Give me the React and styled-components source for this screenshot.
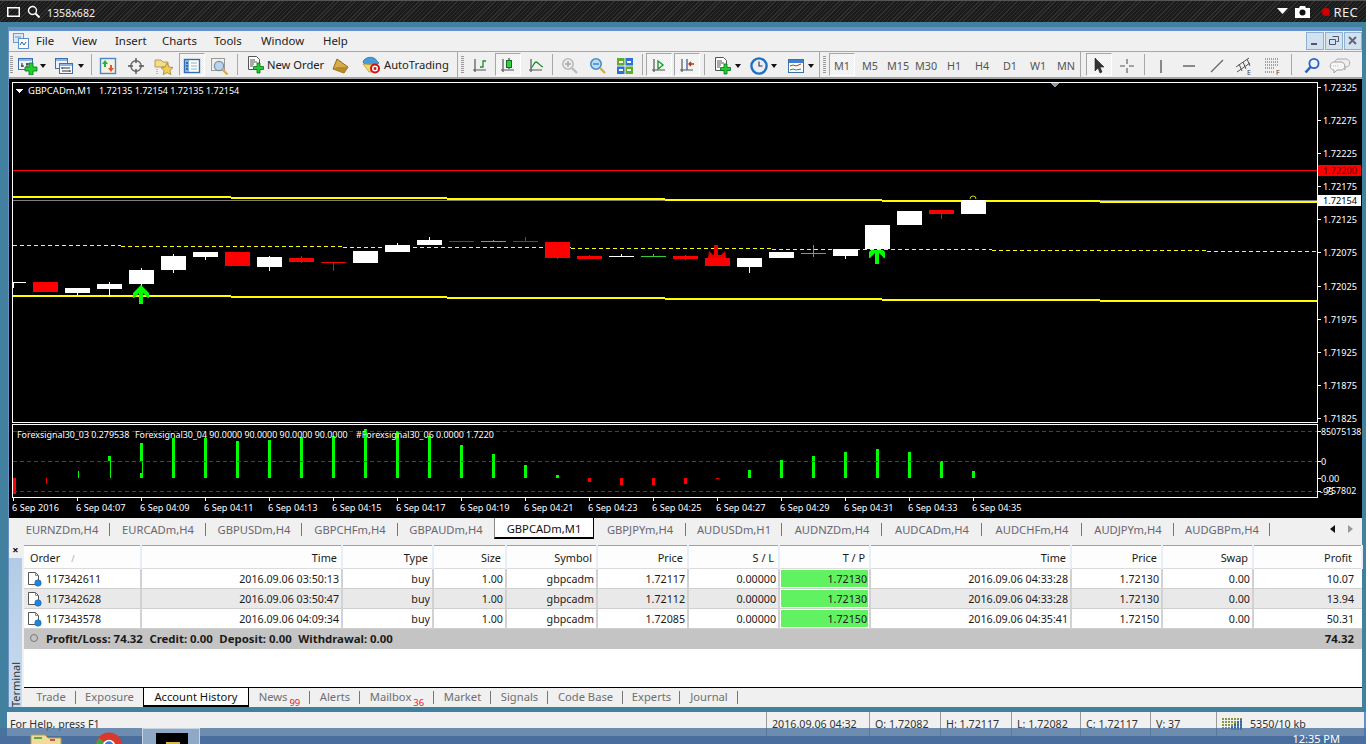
import React from "react";
import styled, { createGlobalStyle } from "styled-components";

const FONT = `"Noto Sans", "Open Sans", "Liberation Sans", sans-serif`;

const GlobalStyle = createGlobalStyle`
  html, body { margin: 0; padding: 0; background: #fff; }
  body { font-family: ${FONT}; font-size: 11px; color: #222; }
`;

const Screen = styled.div`
  position: relative;
  width: 1366px;
  height: 744px;
  overflow: hidden;
  background: #42809f;
`;

/* ---------- screen recorder bar ---------- */
const RecorderBar = styled.div`
  height: 21px;
  border-top: 1px solid #555;
  display: flex;
  align-items: center;
  padding: 0 8px 0 7px;
  color: #eee;
  font-size: 10.6px;
  background: repeating-linear-gradient(135deg, #1b1b1b 0 2px, #303030 2px 3px);
`;
const RecSize = styled.span`
  flex: 1;
  padding-top: 2px;
`;
const RecTool = styled.div`
  flex: none;
  width: ${(p) => p.$w}px;
  display: flex;
  justify-content: center;
`;
const RecDot = styled.span`
  width: 8px;
  height: 8px;
  margin: 0 4px 0 4px;
  border-radius: 50%;
  background: #d00000;
`;
const RecLabel = styled.span`
  font-size: 13px;
  letter-spacing: 0.3px;
`;

/* ---------- app window ---------- */
const AppWindow = styled.div`
  margin: 5px 4px 0 8px;
  border-top: 4px solid #6490c8;
  border-left: 1px solid #6a93c4;
  background: #f0f0f0;
`;
const MenuBar = styled.div`
  height: 20px;
  display: flex;
  align-items: center;
  padding-left: 4px;
  background: #f0f0f0;
`;
const MenuList = styled.div`
  display: flex;
  padding: 0 0 2px 7px;
`;
const MenuItem = styled.span`
  width: ${(p) => p.$w}px;
  font-size: 11.4px;
  color: #222;
`;
const WinControls = styled.div`
  margin-left: auto;
  display: flex;
  gap: 1px;
`;
const WinButton = styled.div`
  width: 16px;
  height: 16px;
  border: 1px solid #8fb0cf;
  background: #d3e2f1;
  display: flex;
  align-items: center;
  justify-content: center;
`;

const Toolbar = styled.div`
  height: 25px;
  display: flex;
  border-top: 1px solid #a8a8a8;
  border-bottom: 2px solid #a4a4a4;
  background: #f0f0f0;
`;
const Band = styled.div`
  display: flex;
  align-items: center;
  width: ${(p) => p.$w}px;
  border-right: 1px solid ${(p) => (p.$last ? "transparent" : "#a8a8a8")};
  box-sizing: content-box;
`;
const Grip = styled.div`
  width: 3px;
  height: 18px;
  margin: 0 ${(p) => p.$after}px 0 ${(p) => p.$before}px;
  background: repeating-linear-gradient(#9a9a9a 0 1px, #f0f0f0 1px 2px);
`;
const Tool = styled.div`
  flex: none;
  box-sizing: border-box;
  width: ${(p) => p.$w || 28}px;
  height: 23px;
  padding-top: 2px;
  margin-left: ${(p) => p.$ml || 0}px;
  display: flex;
  align-items: center;
  justify-content: center;
  position: relative;
  font-size: 10.8px;
  color: #555;
  ${(p) => p.$on && `
    &::before {
      content: "";
      position: absolute;
      left: 1px; right: 1px; top: 0; bottom: 0;
      border: 1px solid;
      border-color: #a6a6a6 #fff #fff #a6a6a6;
      background: repeating-conic-gradient(#fbfbfb 0 25%, #ededed 0 50%) 0 0 / 2px 2px;
    }
    & > * { position: relative; }
  `}
`;
const TextTool = styled.div`
  flex: none;
  width: ${(p) => p.$w}px;
  display: flex;
  align-items: center;
  gap: 3px;
  padding-left: 6px;
  box-sizing: border-box;
  font-size: 11.2px;
  color: #222;
  white-space: nowrap;
`;
const Arrow = styled.span`
  flex: none;
  width: 8px;
  padding-top: 2px;
  display: flex;
  justify-content: center;
  &::after {
    content: "";
    border: 3px solid transparent;
    border-top: 4px solid #111;
    border-bottom: 0;
  }
`;
const Sep = styled.span`
  flex: none;
  width: 1px;
  height: 21px;
  background: #a8a8a8;
  margin: 0 ${(p) => p.$r}px 0 ${(p) => p.$l}px;
`;

/* ---------- chart ---------- */
const ChartSvg = styled.svg`
  display: block;
  width: 1353px;
  height: 439px;
  background: #000;
  font-family: ${FONT};
  font-size: 9.2px;
`;

/* ---------- symbol tabs ---------- */
const SymbolTabs = styled.div`
  height: 23px;
  display: flex;
  padding-left: 5px;
  background: #f0f0f0;
`;
const SymbolTab = styled.div`
  flex: none;
  box-sizing: border-box;
  width: ${(p) => p.$w}px;
  height: 21px;
  padding-top: 2px;
  display: flex;
  align-items: center;
  justify-content: center;
  font-size: 11.2px;
  color: ${(p) => (p.$on ? "#111" : "#6a6670")};
  background: ${(p) => (p.$on ? "#fff" : "transparent")};
  ${(p) => p.$on
    ? "border-right: 1px solid #000; border-bottom: 2px solid #000; border-left: 1px solid #888;"
    : ""}
  ${(p) => p.$div && `
    position: relative;
    &::after {
      content: "";
      position: absolute;
      right: 0; top: 5px; bottom: 3px;
      width: 1px;
      background: #777;
    }
  `}
`;
const TabScroll = styled.div`
  margin-left: auto;
  display: flex;
  align-items: center;
  gap: 13px;
  height: 21px;
  padding-right: 9px;
`;
const ScrollTri = styled.span`
  border: 4px solid transparent;
  ${(p) => p.$dir === "left"
    ? "border-right: 5px solid #111; border-left: 0;"
    : "border-left: 5px solid #999; border-right: 0;"}
`;

/* ---------- terminal ---------- */
const Terminal = styled.div`
  height: 166px;
  display: flex;
  background: #f0f0f0;
`;
const SidePanel = styled.div`
  flex: none;
  width: 13px;
  margin-right: 2px;
  display: flex;
  flex-direction: column;
`;
const CloseCell = styled.div`
  height: 17px;
  display: flex;
  align-items: center;
  justify-content: center;
  font-size: 11px;
  font-weight: 700;
  color: #111;
`;
const SideLabel = styled.div`
  flex: 1;
  display: flex;
  flex-direction: column;
  align-items: center;
  background: linear-gradient(#b3cbe6, #c9dcef);
  span {
    writing-mode: vertical-rl;
    transform: rotate(180deg);
    margin-top: auto;
    font-size: 11px;
    color: #333;
    line-height: 13px;
  }
`;
const TerminalMain = styled.div`
  flex: 1;
  padding-top: 4px;
  display: flex;
  flex-direction: column;
  min-width: 0;
`;
const TableArea = styled.div`
  flex: 1;
  background: #fff;
`;
const Table = styled.table`
  border-collapse: collapse;
  table-layout: fixed;
  width: 1338px;
  font-size: 10.7px;
  color: #1a1a1a;
`;
const HeadCell = styled.th`
  height: 22px;
  padding: 0 ${(p) => (p.$end ? 9 : 4)}px 0 6px;
  font-size: 10.9px;
  font-weight: 400;
  text-align: ${(p) => p.$align || "right"};
  border-top: 1px solid #a0a0a0;
  border-bottom: 1px solid #dcdcdc;
  border-right: 2px solid #e6eefa;
  background: #fdfdfd;
  overflow: hidden;
  white-space: nowrap;
`;
const SortMark = styled.span`
  margin-left: 11px;
  color: #aaa;
  font-size: 9px;
`;
const Row = styled.tr`
  background: ${(p) => (p.$alt ? "#e9e9e9" : "#fff")};
`;
const Cell = styled.td`
  height: 19px;
  padding: 0 2px 0 3px;
  text-align: right;
  border-bottom: 1px solid #cfcfcf;
  border-right: 2px solid #d2d2d2;
  white-space: nowrap;
  overflow: hidden;
  ${(p) => p.$tp && "background: #60f260; box-shadow: inset 0 0 0 1px #fff;"}
  ${(p) => p.$end && "border-right: 0; padding-right: 8px;"}
`;
const OrderCell = styled(Cell)`
  text-align: left;
  padding-left: 3px;
`;
const OrderInner = styled.div`
  display: flex;
  align-items: center;
  gap: 4px;
`;
const TotalRow = styled.tr`
  background: #c4c4c4;
  font-size: 11.4px;
  font-weight: 700;
`;
const TotalCell = styled.td`
  height: 18px;
  padding: 0 8px 2px 6px;
  text-align: ${(p) => p.$align || "left"};
  white-space: nowrap;
`;
const TotalInner = styled.div`
  display: flex;
  align-items: center;
`;
const TotalDot = styled.span`
  width: 6px;
  height: 6px;
  margin-right: 8px;
  border-radius: 50%;
  background: #c4c4c4;
  border: 1px solid #777;
`;
const TotalItem = styled.span`
  margin-right: 6.5px;
`;
const BottomTabs = styled.div`
  height: 19px;
  display: flex;
  border-top: 1px solid #000;
  background: #f0f0f0;
  padding-left: 2px;
`;
const BottomTab = styled.div`
  flex: none;
  box-sizing: border-box;
  width: ${(p) => p.$w}px;
  height: 19px;
  padding-bottom: 2px;
  display: flex;
  align-items: center;
  justify-content: center;
  position: relative;
  font-size: 11.2px;
  color: ${(p) => (p.$on ? "#111" : "#6f6f6f")};
  ${(p) => p.$on && `
    background: #fff;
    margin-top: -1px;
    height: 20px;
    padding-bottom: 0;
    border: 1px solid #000;
    border-top-width: 1px;
    border-bottom-width: 2px;
  `}
  ${(p) => p.$div && `
    &::after {
      content: "";
      position: absolute;
      right: 0; top: 3px; bottom: 3px;
      width: 1px;
      background: #777;
    }
  `}
`;
const Badge = styled.span`
  align-self: flex-end;
  font-size: 9.5px;
  line-height: 9px;
  margin: 0 0 -2px 2px;
  color: #f01818;
`;

/* ---------- status bar ---------- */
const StatusBar = styled.div`
  margin: 5px 0 0 7px;
  height: 24px;
  border-right: 2px solid #6490c8;
  display: flex;
  background: #f0f0f0;
  font-size: 10.7px;
  color: #333;
`;
const StatusHelp = styled.div`
  flex: 1;
  padding: 5px 0 0 3px;
`;
const StatusCell = styled.div`
  flex: none;
  box-sizing: border-box;
  width: ${(p) => p.$w}px;
  padding: 5px 0 0 5px;
  border-left: 1px solid #999;
  display: flex;
  align-items: flex-start;
  gap: 6px;
  white-space: nowrap;
`;

/* ---------- taskbar, over the bottom of the window ---------- */
const Taskbar = styled.div`
  position: absolute;
  left: 0;
  right: 0;
  bottom: 0;
  height: 16px;
  display: flex;
  overflow: hidden;
  background: linear-gradient(rgba(72, 112, 158, 0.78) 0 8px, #4a6f9e 8px);
`;
const TaskIcon = styled.div`
  flex: none;
  margin-left: ${(p) => p.$ml}px;
  padding-top: ${(p) => p.$pt}px;
`;
const TaskActive = styled.div`
  flex: none;
  box-sizing: border-box;
  width: 58px;
  height: 18px;
  margin-left: 19px;
  padding: 4px 0 0 13px;
  background: #8ea8c6;
  border: 1px solid #c6d4e4;
`;
const TaskApp = styled.div`
  width: 32px;
  height: 14px;
  background: linear-gradient(#000 0 9px, transparent 9px),
    linear-gradient(90deg, #000 0 10px, #d8b840 10px 24px, #000 24px);
`;
const Clock = styled.div`
  margin-left: auto;
  padding: 3px 26px 0 0;
  color: #fff;
  font-size: 11px;
  line-height: 16px;
`;

/* ---------- icons ---------- */
const Ic = ({ w = 18, h = 18, children }) => (
  <svg width={w} height={h} viewBox={`0 0 ${w} ${h}`}>{children}</svg>
);
const Plus = ({ x, y, s = 11 }) => {
  const t = Math.round(s / 3);
  const a = (s - t) / 2;
  return (
    <path
      d={`M${x + a} ${y}h${t}v${a}h${a}v${t}h${-a}v${a}h${-t}v${-a}h${-a}v${-t}h${a}z`}
      fill="#20d030"
      stroke="#0d6b1a"
      strokeWidth="0.8"
    />
  );
};
const MiniAxes = () => (
  <path d="M3 1v13M1 12h13" stroke="#555" strokeWidth="1.2" fill="none" />
);
const NewChartIcon = () => (
  <Ic w={20}>
    <rect x="0.5" y="1.5" width="14" height="11" fill="#eef3fc" stroke="#3d6fa8" />
    <rect x="1" y="2" width="13" height="2" fill="#8fb4e3" />
    <path d="M4 6v4M3 9h3M9 6v4M8 7h3" stroke="#222" fill="none" />
    <Plus x={7} y={6} s={12} />
  </Ic>
);
const ProfileIcon = () => (
  <Ic w={20}>
    <rect x="0.5" y="1.5" width="12" height="10" fill="#eef3fc" stroke="#3d6fa8" />
    <rect x="1" y="2" width="11" height="2" fill="#8fb4e3" />
    <rect x="4.5" y="6.5" width="13" height="10" fill="#f6f9ff" stroke="#3d6fa8" />
    <rect x="5" y="7" width="12" height="2" fill="#8fb4e3" />
    <path d="M7 11h8M7 14h8M7 10v2M15 13v2" stroke="#333" fill="none" />
  </Ic>
);
const MarketIcon = () => (
  <Ic>
    <rect x="1.5" y="1.5" width="15" height="15" fill="#f3f0e4" stroke="#4d86c6" strokeWidth="1.4" />
    <path d="M6 3l3 4H7v3H5V7H3z" fill="#1cb83a" />
    <path d="M12 15l3-4h-2V8h-2v3H9z" fill="#e2542a" />
  </Ic>
);
const NavIcon = () => (
  <Ic>
    <circle cx="9" cy="9" r="5.2" fill="none" stroke="#666" strokeWidth="1.4" />
    <path d="M9 1v5M9 12v5M1 9h5M12 9h5" stroke="#555" strokeWidth="1.4" />
  </Ic>
);
const FolderStarIcon = () => (
  <Ic w={20}>
    <path d="M1 3h6l2 2h5v5H1z" fill="#f3dc8c" stroke="#a68a3c" strokeWidth="0.8" />
    <path d="M13 6l2 4 4 .6-3 2.8.8 4.2-3.8-2-3.8 2 .8-4.2-3-2.8 4-.6z" fill="#f0cb5a" stroke="#a58428" strokeWidth="0.8" />
    <path d="M3 12v5" stroke="#888" strokeDasharray="1 1" />
  </Ic>
);
const TerminalIcon = () => (
  <Ic>
    <rect x="1.5" y="2.5" width="15" height="13" fill="#fff" stroke="#2f6db5" strokeWidth="1.4" />
    <rect x="2" y="3" width="4" height="12" fill="#7fb0e6" />
    <path d="M8 6h6M8 9h6M8 12h6" stroke="#9ab" />
    <path d="M3 6h2M3 9h2M3 12h2" stroke="#124" />
  </Ic>
);
const TesterIcon = () => (
  <Ic w={20}>
    <rect x="1.5" y="1.5" width="13" height="12" fill="#f1eee7" stroke="#9a9a9a" />
    <circle cx="9" cy="9" r="4.6" fill="#b9d4ee" stroke="#7a8ca0" strokeWidth="1.2" />
    <path d="M12.5 12.5l5 5" stroke="#d7a94a" strokeWidth="2.2" />
  </Ic>
);
const OrderIcon = () => (
  <Ic w={17} h={19}>
    <path d="M1.5 1.5h8l3 3v10h-11z" fill="#fff" stroke="#555" />
    <path d="M3 5h5M3 7h7M3 9h4M3 11h3" stroke="#555" />
    <Plus x={6.5} y={8} s={10} />
  </Ic>
);
const GoldIcon = () => (
  <Ic>
    <path d="M5 2l11 8-4 6-11-4z" fill="#d6ad48" stroke="#8c6a1a" />
    <path d="M1 12l11 4 4-6-11 0z" fill="#b98b28" />
  </Ic>
);
const AutoIcon = () => (
  <Ic w={20} h={19}>
    <path d="M2 7c1-5 11-7 14-1l2 2-3 2H4z" fill="#4a9ad8" stroke="#2a6a9e" strokeWidth="0.7" />
    <path d="M2 9l6 8h4l4-7z" fill="#f2d66b" stroke="#b9962c" strokeWidth="0.7" />
    <circle cx="14" cy="13.5" r="4" fill="#fff" stroke="#d21212" strokeWidth="2" />
    <rect x="12.7" y="12.2" width="2.6" height="2.6" fill="#d21212" />
  </Ic>
);
const ChartKindIcon = ({ kind }) => (
  <Ic w={16} h={16}>
    <MiniAxes />
    {kind === "bar" && <path d="M8 9h3V3h3M11 3v6" stroke="#1a8f2c" strokeWidth="1.3" fill="none" />}
    {kind === "candle" && (
      <>
        <path d="M9 0v11" stroke="#222" />
        <rect x="6.5" y="2.5" width="5" height="7" fill="#2fd03f" stroke="#146b22" />
      </>
    )}
    {kind === "line" && <path d="M3 10c2-1 3-6 5-6s4 4 7 5" stroke="#1a8f2c" strokeWidth="1.3" fill="none" />}
    {kind === "scroll" && <path d="M7 3l5 4-5 4z" fill="#fff" stroke="#1a9a2c" strokeWidth="1.4" />}
    {kind === "shift" && (
      <>
        <path d="M8 1v11" stroke="#2a5fa8" strokeWidth="1.3" />
        <path d="M15 6H10M12 4l-2 2 2 2" stroke="#b3300e" strokeWidth="1.3" fill="none" />
      </>
    )}
  </Ic>
);
const ZoomIcon = ({ plus }) => (
  <Ic w={17} h={17}>
    <circle cx="7" cy="7" r="5.2" fill={plus ? "#eee" : "#bcdcf4"} stroke={plus ? "#bbb" : "#4a8cc8"} strokeWidth="1.6" />
    <path d="M11 11l5 5" stroke={plus ? "#bbb" : "#d8ac3a"} strokeWidth="2.4" />
    <path d="M4 7h6" stroke={plus ? "#aaa" : "#4a8cc8"} strokeWidth="1.6" />
    {plus && <path d="M7 4v6" stroke="#aaa" strokeWidth="1.6" />}
  </Ic>
);
const TileIcon = () => (
  <Ic>
    <rect x="1" y="1" width="7.5" height="7.5" fill="#5fae27" />
    <rect x="9.5" y="1" width="7.5" height="7.5" fill="#2f6fd8" />
    <rect x="1" y="9.5" width="7.5" height="7.5" fill="#2f6fd8" />
    <rect x="9.5" y="9.5" width="7.5" height="7.5" fill="#5fae27" />
    <path d="M3 5h4M11 5h4M3 13h4M11 13h4" stroke="#fff" strokeWidth="2" />
  </Ic>
);
const ClockIcon = () => (
  <Ic>
    <circle cx="9" cy="9" r="7.6" fill="#e8eef4" stroke="#1f70c4" strokeWidth="2.4" />
    <path d="M9 4.5V9l3.5 0" stroke="#333" strokeWidth="1.1" fill="none" />
  </Ic>
);
const TemplateIcon = () => (
  <Ic>
    <rect x="1.5" y="2.5" width="15" height="13" fill="#fff" stroke="#3d6fa8" />
    <rect x="2" y="3" width="14" height="3" fill="#3d7fd0" />
    <path d="M3 9l3-1 3 1 5-2" stroke="#b3400e" fill="none" />
    <path d="M3 13l3-1 3 1 5-1" stroke="#1a9a2c" fill="none" />
  </Ic>
);
const CursorIcon = () => (
  <Ic w={14} h={18}>
    <path d="M3 1l0 13 3-3 2 5 2-1-2-5 4 0z" fill="#333" stroke="#222" strokeWidth="0.6" />
  </Ic>
);
const CrossIcon = () => (
  <Ic>
    <path d="M9 2v5M9 11v5M2 9h5M11 9h5" stroke="#555" strokeWidth="1.1" />
  </Ic>
);
const VLineIcon = () => <Ic><path d="M9 3v13" stroke="#444" strokeWidth="1.2" /></Ic>;
const HLineIcon = () => <Ic><path d="M3 9h12" stroke="#444" strokeWidth="1.2" /></Ic>;
const TrendIcon = () => <Ic><path d="M3 15L15 3" stroke="#666" strokeWidth="1.2" /></Ic>;
const ChannelIcon = () => (
  <Ic w={20} h={20}>
    <path d="M1 11L14 2M2 16L15 7M4 8l3 7M8 6l3 7M12 3l3 7" stroke="#555" strokeWidth="1" fill="none" />
    <text x="12" y="19" fontSize="7" fill="#444" fontFamily={FONT}>E</text>
  </Ic>
);
const FiboIcon = () => (
  <Ic w={20} h={20}>
    <path d="M2 3h13M2 6h13M2 9h13M2 12h9M2 16h9" stroke="#555" strokeDasharray="1 1" />
    <text x="13" y="19" fontSize="7" fill="#444" fontFamily={FONT}>F</text>
  </Ic>
);
const SearchIcon = () => (
  <Ic>
    <circle cx="11" cy="6.5" r="4.6" fill="#e8f2fc" stroke="#2a62c0" strokeWidth="1.8" />
    <path d="M7.5 10L2.5 15.5" stroke="#2a62c0" strokeWidth="2.6" />
  </Ic>
);
const ChatIcon = () => (
  <Ic w={22}>
    <path d="M9 2h8c5 0 5 8 0 8h-1v3l-3-3H9C5 10 5 2 9 2z" fill="#eee" stroke="#aaa" />
    <path d="M5 5h7c5 0 5 8 0 8H8l-3 3v-3C0 13 0 5 5 5z" fill="#f6f6f6" stroke="#a2a2a2" />
    <path d="M4 9h6" stroke="#bbb" strokeDasharray="1 1" />
  </Ic>
);
const AppLogo = () => (
  <Ic w={16} h={16}>
    <rect x="0.5" y="0.5" width="10" height="9" fill="#dbe8f8" stroke="#6b9bd2" />
    <rect x="5.5" y="5.5" width="10" height="10" fill="#fff" stroke="#5d8fcb" />
    <path d="M7 12l2-3 2 3 2-3" stroke="#2c62a8" fill="none" />
    <path d="M2 4h6" stroke="#6b9bd2" />
  </Ic>
);
const DocIcon = () => (
  <Ic w={15} h={16}>
    <path d="M1.5 1.5h7l3 3v9h-10z" fill="#fff" stroke="#555" />
    <path d="M8.5 1.5v3h3" fill="none" stroke="#888" />
    <circle cx="11" cy="12" r="3.2" fill="#1f86de" stroke="#0e5ea8" strokeWidth="0.6" />
  </Ic>
);
const WinGlyph = ({ kind }) => (
  <Ic w={12} h={12}>
    {kind === "min" && <rect x="2" y="8" width="6" height="2" fill="#556" />}
    {kind === "max" && <path d="M4.5 1.5h6v5h-2M1.5 4.5h6v5h-6z" stroke="#556" fill="none" />}
    {kind === "close" && <path d="M2 2l7 7M9 2l-7 7" stroke="#667" strokeWidth="2" />}
  </Ic>
);
const ScreenIcon = () => (
  <Ic w={13} h={10}><rect x="0.75" y="0.75" width="11.5" height="8.5" fill="none" stroke="#fff" strokeWidth="1.5" /></Ic>
);
const LensIcon = () => (
  <Ic w={14} h={14}>
    <circle cx="5.5" cy="5.5" r="4" fill="none" stroke="#fff" strokeWidth="1.4" />
    <path d="M8.5 8.5l4 4" stroke="#fff" strokeWidth="1.8" />
  </Ic>
);
const CameraIcon = () => (
  <Ic w={15} h={12}>
    <path d="M0 2h4l1-2h5l1 2h4v10H0z" fill="#fff" />
    <circle cx="7.5" cy="6.5" r="3" fill="#111" />
  </Ic>
);
const DropTri = () => (
  <Ic w={11} h={7}><path d="M0 0h11L5.5 6z" fill="#fff" /></Ic>
);
const FolderTask = () => (
  <Ic w={32} h={12}>
    <path d="M1 1h14l3 3h13v9H1z" fill="#f0dc9a" stroke="#b59c55" />
    <rect x="4" y="3" width="8" height="2" fill="#5aa848" />
    <rect x="20" y="5" width="5" height="2" fill="#d05050" />
  </Ic>
);
const ChromeTask = () => (
  <Ic w={28} h={12}>
    <circle cx="14" cy="14" r="13.5" fill="#d8392b" />
    <path d="M14 14L2 22A14 14 0 0 1 4 6z" fill="#4aa04a" />
    <circle cx="14" cy="14" r="5.5" fill="#3b7ddc" stroke="#fff" strokeWidth="1.6" />
  </Ic>
);

/* ---------- chart data ---------- */
const RED = "#ff0000";
const WHT = "#ffffff";
const GRN = "#32cd32";
// x, body top, body bottom, colour, wick top, wick bottom
const candles = [
  [33, 282, 292, RED],
  [65, 288, 293, WHT, 288, 295],
  [97, 284, 289, WHT, 282, 297],
  [129, 270, 284, WHT, 268, 288],
  [161, 256, 270, WHT, 254, 273],
  [193, 252, 257, WHT, 252, 260],
  [225, 252, 266, RED],
  [257, 257, 267, WHT, 256, 271],
  [289, 258, 262, RED, 256, 263],
  [321, 262, 263, RED, 262, 271],
  [353, 251, 263, WHT],
  [385, 245, 252, WHT, 243, 252],
  [417, 240, 245, WHT, 237, 245],
  [449, 241, 242, RED],
  [481, 241, 242, GRN, 240, 242],
  [513, 241, 242, RED, 237, 242],
  [545, 242, 258, RED, 242, 259],
  [577, 256, 259, RED, 255, 259],
  [609, 256, 257, WHT, 254, 257],
  [641, 256, 257, GRN, 254, 257],
  [673, 256, 259, RED, 255, 260],
  [705, 258, 266, RED],
  [737, 258, 267, WHT, 258, 273],
  [769, 252, 258, WHT],
  [801, 253, 254, GRN, 245, 257],
  [833, 249, 256, WHT, 249, 259],
  [865, 225, 249, WHT],
  [897, 211, 225, WHT],
  [929, 210, 214, RED, 210, 219],
  [961, 200, 214, WHT],
];
const topBand = [[13, 231, 196], [231, 447, 197], [447, 665, 198], [665, 882, 199], [882, 1100, 200], [1100, 1317, 201]];
const lowBand = [[13, 231, 295], [231, 447, 296], [447, 665, 297], [665, 882, 298], [882, 1100, 299], [1100, 1317, 300]];
const midBand = [[13, 121, 245], [121, 343, 246], [343, 571, 247], [571, 772, 248], [772, 992, 249], [992, 1207, 250], [1207, 1317, 251]];
const axisLabels = [
  [87, "1.72325"], [120, "1.72275"], [153, "1.72225"], [186, "1.72175"], [219, "1.72125"],
  [252, "1.72075"], [286, "1.72025"], [319, "1.71975"], [352, "1.71925"], [385, "1.71875"], [418, "1.71825"],
];
// x, top, bottom, colour, width
const LIME = "#00ff00";
const bars = [
  [13, 478, 494, RED, 3], [46, 478, 484, RED, 1], [78, 471, 478, LIME, 1],
  [110, 461, 478, LIME, 1], [108, 456, 461, LIME, 3],
  [140, 443, 461, LIME, 3], [142, 461, 473, LIME, 1], [140, 473, 478, LIME, 3],
  [172, 438, 478, LIME, 3], [204, 438, 478, LIME, 3], [236, 441, 478, LIME, 3], [268, 440, 478, LIME, 3],
  [300, 437, 478, LIME, 3], [332, 436, 478, LIME, 3], [364, 429, 478, LIME, 3], [396, 431, 478, LIME, 3],
  [428, 436, 478, LIME, 3], [460, 445, 478, LIME, 3], [492, 454, 478, LIME, 3], [524, 465, 478, LIME, 3],
  [556, 475, 478, LIME, 3], [588, 478, 482, RED, 3], [620, 478, 485, RED, 3], [652, 478, 485, RED, 3],
  [684, 478, 484, RED, 3], [716, 478, 479, RED, 3], [748, 470, 478, LIME, 3], [780, 460, 478, LIME, 3],
  [812, 456, 478, LIME, 3], [844, 452, 478, LIME, 3], [876, 449, 478, LIME, 3], [908, 452, 478, LIME, 3],
  [940, 461, 478, LIME, 3], [972, 471, 478, LIME, 3],
];
const timeLabels = [
  "6 Sep 2016", "6 Sep 04:07", "6 Sep 04:09", "6 Sep 04:11", "6 Sep 04:13", "6 Sep 04:15", "6 Sep 04:17", "6 Sep 04:19",
  "6 Sep 04:21", "6 Sep 04:23", "6 Sep 04:25", "6 Sep 04:27", "6 Sep 04:29", "6 Sep 04:31", "6 Sep 04:33", "6 Sep 04:35",
];

const Chart = () => (
  <ChartSvg viewBox="9 79 1353 439">
    <g shapeRendering="crispEdges">
      <path d="M12 82.5H1317.5V422.5H12.5V82M12 424.5H1317.5V497.5H12.5V424" fill="none" stroke="#fff" />
      <rect x="13" y="170" width="1304" height="1" fill={RED} />
      <rect x="13" y="200" width="1304" height="1" fill="#7d7d7d" />
      {midBand.map(([a, b, y]) => (
        <line key={a} x1={a} x2={b} y1={y + 0.5} y2={y + 0.5} stroke="#ffff00" strokeDasharray="4 3" />
      ))}
      {topBand.map(([a, b, y]) => <rect key={a} x={a} y={y} width={b - a} height="2" fill="#ffff00" />)}
      {lowBand.map(([a, b, y]) => <rect key={a} x={a} y={y} width={b - a} height="2" fill="#ffff00" />)}
      <path d="M13 288v-6h13" stroke="#fff" fill="none" />
      {candles.map(([x, top, bottom, c, wt, wb]) => (
        <g key={x} fill={c}>
          {wt !== undefined && <rect x={x + 12} y={wt} width="1" height={wb - wt} />}
          <rect x={x} y={top} width="25" height={bottom - top} />
        </g>
      ))}
      {bars.map(([x, t, b, c, w], i) => <rect key={i} x={x} y={t} width={w} height={b - t} fill={c} />)}
      {[431, 461, 491].map((y) => (
        <line key={y} x1="13" x2="1317" y1={y + 0.5} y2={y + 0.5} stroke="#e00000" strokeDasharray="4 3" />
      ))}
      {axisLabels.map(([y]) => <rect key={y} x="1318" y={y} width="3" height="1" fill="#fff" />)}
      {[431, 461, 478, 491].map((y) => <rect key={y} x="1318" y={y} width="3" height="1" fill="#fff" />)}
      {timeLabels.map((t, i) => <rect key={t} x={13 + i * 64} y="498" width="1" height="3" fill="#fff" />)}
      <rect x="1318" y="165" width="43" height="11" fill={RED} />
      <rect x="1318" y="195" width="43" height="11" fill="#fff" />
      <polygon points="16,89 23,89 19.5,93" fill="#fff" />
      <polygon points="1051,83 1059,83 1055,88" fill="#8c9cac" />
    </g>
    <polygon points="141,285 149,293 149,298 148,298 143,293 143,304 139,304 139,293 134,298 133,298 133,293" fill={LIME} />
    <polygon points="869,252 871,250 883,250 885,252 885,258 884,258 879,253 879,264 875,264 875,253 870,258 869,258" fill={LIME} />
    <polygon points="714,245 718,245 718,255 721,255 725,251 726,258 708,258 709,251 713,255 714,255" fill="#e80000" />
    <path d="M970 199a3 3 0 0 1 6 0" fill="none" stroke="#d4d400" />
    <g fill="#fff">
      <text x="28" y="93.5" fontSize="9.5">GBPCADm,M1</text>
      <text x="99" y="93.5" fontSize="9">1.72135 1.72154 1.72135 1.72154</text>
      {axisLabels.map(([y, t]) => <text key={y} x="1323" y={y + 4}>{t}</text>)}
      <text x="17" y="437.5" fontSize="8.9">Forexsignal30_03 0.279538</text>
      <text x="135" y="437.5" fontSize="8.9">Forexsignal30_04 90.0000 90.0000 90.0000 90.0000</text>
      <text x="356" y="437.5" fontSize="8.9">#Forexsignal30_06 0.0000 1.7220</text>
      <text x="1321" y="435" fontSize="8.8">85075138</text>
      <text x="1321" y="465">0</text>
      <text x="1321" y="482">0.00</text>
      <text x="1320" y="495">-95</text>
      <text x="1326" y="494" fontSize="8.8">757802</text>
      {timeLabels.map((t, i) => <text key={t} x={12 + i * 64} y="510.5">{t}</text>)}
    </g>
    <text x="1323" y="174" fill="#600000">1.72200</text>
    <text x="1323" y="204" fill="#000">1.72154</text>
  </ChartSvg>
);

/* ---------- table data ---------- */
const columns = [
  ["Order", 117], ["Time", 201], ["Type", 91], ["Size", 73], ["Symbol", 91], ["Price", 91],
  ["S / L", 91], ["T / P", 91], ["Time", 201], ["Price", 91], ["Swap", 91], ["Profit", 109],
];
const orders = [
  ["117342611", "2016.09.06 03:50:13", "1.72117", "1.72130", "2016.09.06 04:33:28", "10.07"],
  ["117342628", "2016.09.06 03:50:47", "1.72112", "1.72130", "2016.09.06 04:33:28", "13.94"],
  ["117343578", "2016.09.06 04:09:34", "1.72085", "1.72150", "2016.09.06 04:35:41", "50.31"],
];
const symbolTabs = [
  ["EURNZDm,H4", 96, true], ["EURCADm,H4", 96, true], ["GBPUSDm,H4", 96, true], ["GBPCHFm,H4", 96, true],
  ["GBPAUDm,H4", 96, false], ["GBPCADm,M1", 100, false, true], ["GBPJPYm,H4", 92, true], ["AUDUSDm,H1", 96, true],
  ["AUDNZDm,H4", 100, true], ["AUDCADm,H4", 100, true], ["AUDCHFm,H4", 100, true], ["AUDJPYm,H4", 92, true],
  ["AUDGBPm,H4", 96, true],
];
const bottomTabs = [
  ["Trade", 50, true], ["Exposure", 67, false], ["Account History", 106, false, true], ["News", 61, true, false, "99"],
  ["Alerts", 50, true], ["Mailbox", 74, true, false, "36"], ["Market", 57, true], ["Signals", 57, true],
  ["Code Base", 75, true], ["Experts", 57, true], ["Journal", 58, true],
];
const periods = ["M1", "M5", "M15", "M30", "H1", "H4", "D1", "W1", "MN"];
const menus = [["File", 36], ["View", 43], ["Insert", 47], ["Charts", 52], ["Tools", 47], ["Window", 62], ["Help", 30]];

export default function App() {
  return (
    <Screen>
      <GlobalStyle />
      <RecorderBar>
        <ScreenIcon />
        <RecTool $w={27}><LensIcon /></RecTool>
        <RecSize>1358x682</RecSize>
        <DropTri />
        <RecTool $w={30}><CameraIcon /></RecTool>
        <RecDot />
        <RecLabel>REC</RecLabel>
      </RecorderBar>

      <AppWindow>
        <MenuBar>
          <AppLogo />
          <MenuList>
            {menus.map(([m, w]) => <MenuItem key={m} $w={w}>{m}</MenuItem>)}
          </MenuList>
          <WinControls>
            <WinButton><WinGlyph kind="min" /></WinButton>
            <WinButton><WinGlyph kind="max" /></WinButton>
            <WinButton><WinGlyph kind="close" /></WinButton>
          </WinControls>
        </MenuBar>

        <Toolbar>
          <Band $w={448}>
            <Grip $before={1} $after={3} />
            <Tool $w={23}><NewChartIcon /></Tool>
            <Arrow />
            <Tool $w={25} $ml={5}><ProfileIcon /></Tool>
            <Arrow />
            <Sep $l={6} $r={2} />
            <Tool><MarketIcon /></Tool>
            <Tool><NavIcon /></Tool>
            <Tool><FolderStarIcon /></Tool>
            <Tool $on><TerminalIcon /></Tool>
            <Tool><TesterIcon /></Tool>
            <Sep $l={3} $r={3} />
            <TextTool $w={86}><OrderIcon />New Order</TextTool>
            <Tool><GoldIcon /></Tool>
            <TextTool $w={98}><AutoIcon />AutoTrading</TextTool>
          </Band>
          <Band $w={361}>
            <Grip $before={3} $after={2} />
            <Tool><ChartKindIcon kind="bar" /></Tool>
            <Tool $on><ChartKindIcon kind="candle" /></Tool>
            <Tool><ChartKindIcon kind="line" /></Tool>
            <Sep $l={2} $r={2} />
            <Tool><ZoomIcon plus /></Tool>
            <Tool><ZoomIcon /></Tool>
            <Tool><TileIcon /></Tool>
            <Sep $l={3} $r={2} />
            <Tool $on><ChartKindIcon kind="scroll" /></Tool>
            <Tool $on><ChartKindIcon kind="shift" /></Tool>
            <Sep $l={3} $r={6} />
            <Tool $w={23}><OrderIcon /></Tool>
            <Arrow />
            <Tool $w={23} $ml={5}><ClockIcon /></Tool>
            <Arrow />
            <Tool $w={23} $ml={6}><TemplateIcon /></Tool>
            <Arrow />
          </Band>
          <Band $w={260}>
            <Grip $before={3} $after={2} />
            {periods.map((p, i) => <Tool key={p} $on={i === 0}><span>{p}</span></Tool>)}
          </Band>
          <Band $w={270} $last>
            <Grip $before={3} $after={1} />
            <Tool $on><CursorIcon /></Tool>
            <Tool><CrossIcon /></Tool>
            <Sep $l={3} $r={2} />
            <Tool><VLineIcon /></Tool>
            <Tool><HLineIcon /></Tool>
            <Tool><TrendIcon /></Tool>
            <Tool><ChannelIcon /></Tool>
            <Tool><FiboIcon /></Tool>
            <Sep $l={4} $r={6} />
            <Tool><SearchIcon /></Tool>
            <Tool><ChatIcon /></Tool>
          </Band>
        </Toolbar>

        <Chart />

        <SymbolTabs>
          {symbolTabs.map(([label, w, div, on]) => (
            <SymbolTab key={label} $w={w} $div={div} $on={on}>{label}</SymbolTab>
          ))}
          <TabScroll>
            <ScrollTri $dir="left" />
            <ScrollTri $dir="right" />
          </TabScroll>
        </SymbolTabs>

        <Terminal>
          <SidePanel>
            <CloseCell>×</CloseCell>
            <SideLabel><span>Terminal</span></SideLabel>
          </SidePanel>
          <TerminalMain>
            <TableArea>
              <Table>
                <colgroup>
                  {columns.map(([name, w], i) => <col key={i} width={w} />)}
                </colgroup>
                <thead>
                  <tr>
                    {columns.map(([name], i) => (
                      <HeadCell key={i} $align={i === 0 ? "left" : "right"} $end={i === 11}>
                        {name}
                        {i === 0 && <SortMark>/</SortMark>}
                      </HeadCell>
                    ))}
                  </tr>
                </thead>
                <tbody>
                  {orders.map((o, i) => (
                    <Row key={o[0]} $alt={i === 1}>
                      <OrderCell><OrderInner><DocIcon />{o[0]}</OrderInner></OrderCell>
                      <Cell>{o[1]}</Cell>
                      <Cell>buy</Cell>
                      <Cell>1.00</Cell>
                      <Cell>gbpcadm</Cell>
                      <Cell>{o[2]}</Cell>
                      <Cell>0.00000</Cell>
                      <Cell $tp>{o[3]}</Cell>
                      <Cell>{o[4]}</Cell>
                      <Cell>{o[3]}</Cell>
                      <Cell>0.00</Cell>
                      <Cell $end>{o[5]}</Cell>
                    </Row>
                  ))}
                  <TotalRow>
                    <TotalCell colSpan={11}>
                      <TotalInner>
                        <TotalDot />
                        <TotalItem>Profit/Loss: 74.32</TotalItem>
                        <TotalItem>Credit: 0.00</TotalItem>
                        <TotalItem>Deposit: 0.00</TotalItem>
                        <TotalItem>Withdrawal: 0.00</TotalItem>
                      </TotalInner>
                    </TotalCell>
                    <TotalCell $align="right">74.32</TotalCell>
                  </TotalRow>
                </tbody>
              </Table>
            </TableArea>
            <BottomTabs>
              {bottomTabs.map(([label, w, div, on, badge]) => (
                <BottomTab key={label} $w={w} $div={div} $on={on}>
                  {label}
                  {badge && <Badge>{badge}</Badge>}
                </BottomTab>
              ))}
            </BottomTabs>
          </TerminalMain>
        </Terminal>
      </AppWindow>

      <StatusBar>
        <StatusHelp>For Help, press F1</StatusHelp>
        <StatusCell $w={103}>2016.09.06 04:32</StatusCell>
        <StatusCell $w={71}>O: 1.72082</StatusCell>
        <StatusCell $w={71}>H: 1.72117</StatusCell>
        <StatusCell $w={69}>L: 1.72082</StatusCell>
        <StatusCell $w={70}>C: 1.72117</StatusCell>
        <StatusCell $w={66}>V: 37</StatusCell>
        <StatusCell $w={148}>
          <Ic w={22} h={14}>
            <path d="M1 1v12M4 1v12M7 1v12M10 1v12M13 1v12M16 1v12M19 1v12" stroke="#6f7f18" strokeWidth="1.6" strokeDasharray="2 1" />
            <path d="M10 13v-4M13 13V6M16 13V4M19 13V2" stroke="#2a5ea8" strokeWidth="1.6" />
          </Ic>
          5350/10 kb
        </StatusCell>
      </StatusBar>

      <Taskbar>
        <TaskIcon $ml={30} $pt={6}><FolderTask /></TaskIcon>
        <TaskIcon $ml={33} $pt={4}><ChromeTask /></TaskIcon>
        <TaskActive><TaskApp /></TaskActive>
        <Clock>12:35 PM</Clock>
      </Taskbar>
    </Screen>
  );
}
